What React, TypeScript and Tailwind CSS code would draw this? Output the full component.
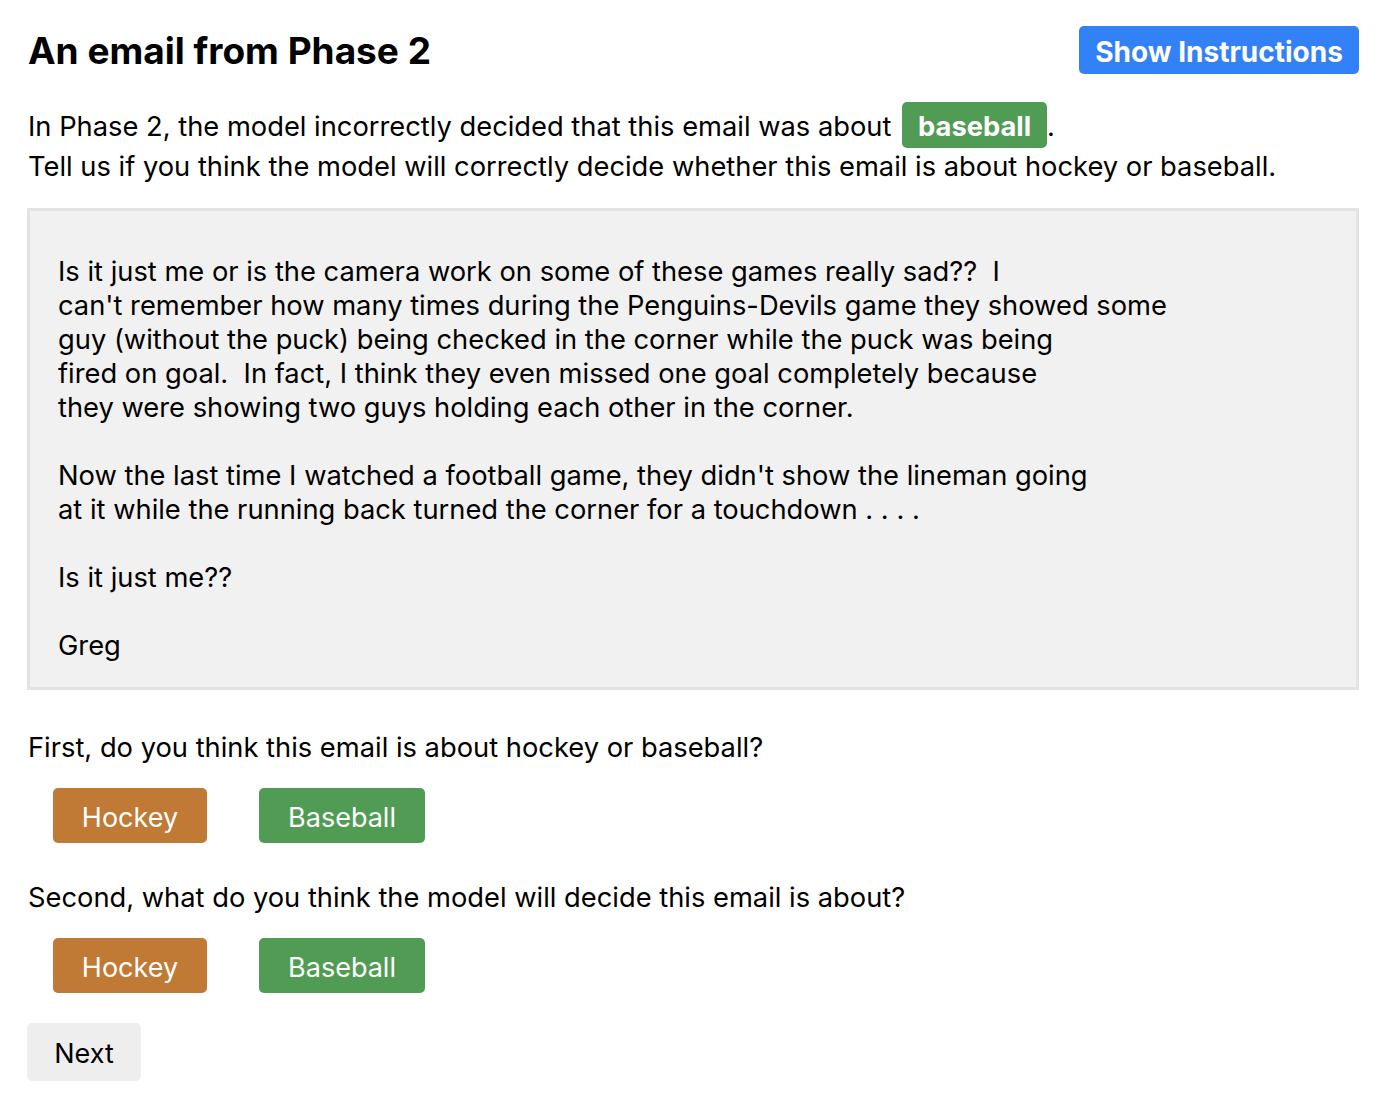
import React from "react";

const EMAIL = `Is it just me or is the camera work on some of these games really sad??  I
can't remember how many times during the Penguins-Devils game they showed some
guy (without the puck) being checked in the corner while the puck was being
fired on goal.  In fact, I think they even missed one goal completely because
they were showing two guys holding each other in the corner.

Now the last time I watched a football game, they didn't show the lineman going
at it while the running back turned the corner for a touchdown . . . .

Is it just me??

Greg`;

function ChoiceRow() {
  return (
    <div className="mt-[23px] flex gap-[52px] pl-[26px]">
      <button className="h-[55px] w-[154px] rounded-[5px] bg-[#c07a35] pt-[3px] text-[27px] leading-none text-white">
        Hockey
      </button>
      <button className="h-[55px] w-[166px] rounded-[5px] bg-[#519c54] pt-[3px] text-[27px] leading-none text-white">
        Baseball
      </button>
    </div>
  );
}

export default function App() {
  return (
    <div className="min-h-screen bg-white pt-[26px] pr-[31px] pb-10 pl-[27px] text-[27.3px] text-black [font-family:Inter,'Noto_Sans',sans-serif]">
      {/* Header */}
      <div className="flex h-[48px] items-center justify-between">
        <h1 className="pl-[1px] text-[37px] leading-none font-bold">An email from Phase 2</h1>
        <button className="h-[48px] w-[280px] rounded-[5px] bg-[#3381f6] pt-[4px] text-[28px] leading-none font-bold text-white">
          Show Instructions
        </button>
      </div>

      {/* Intro */}
      <div className="mt-[28px] pl-[1px]">
        <p className="flex h-[46px] items-center whitespace-pre">
          <span className="pt-[4px]">{"In Phase 2, the model incorrectly decided that this email was about "}</span>
          <span className="ml-[3px] flex h-[46px] items-center rounded-[5px] bg-[#519c54] px-[16px] pt-[4px] font-bold text-white">
            baseball
          </span>
          <span className="pt-[4px]">.</span>
        </p>
        <p className="mt-[2px] leading-[34px]">
          Tell us if you think the model will correctly decide whether this email is about hockey or baseball.
        </p>
      </div>

      {/* Email body */}
      <div className="mt-[24px] border-[3px] border-[#e3e3e3] bg-[#f1f1f1] pt-[44px] pr-6 pb-[24px] pl-[28px]">
        <pre className="whitespace-pre-wrap leading-[34px] [font-family:inherit]">{EMAIL}</pre>
      </div>

      {/* Questions */}
      <p className="mt-[41px] pl-[1px] leading-[34px]">First, do you think this email is about hockey or baseball?</p>
      <ChoiceRow />

      <p className="mt-[38px] pl-[1px] leading-[34px]">Second, what do you think the model will decide this email is about?</p>
      <ChoiceRow />

      <button className="mt-[30px] h-[58px] w-[114px] rounded-[5px] bg-[#eeeeee] pt-[3px] text-[27px] leading-none text-black">
        Next
      </button>
    </div>
  );
}
